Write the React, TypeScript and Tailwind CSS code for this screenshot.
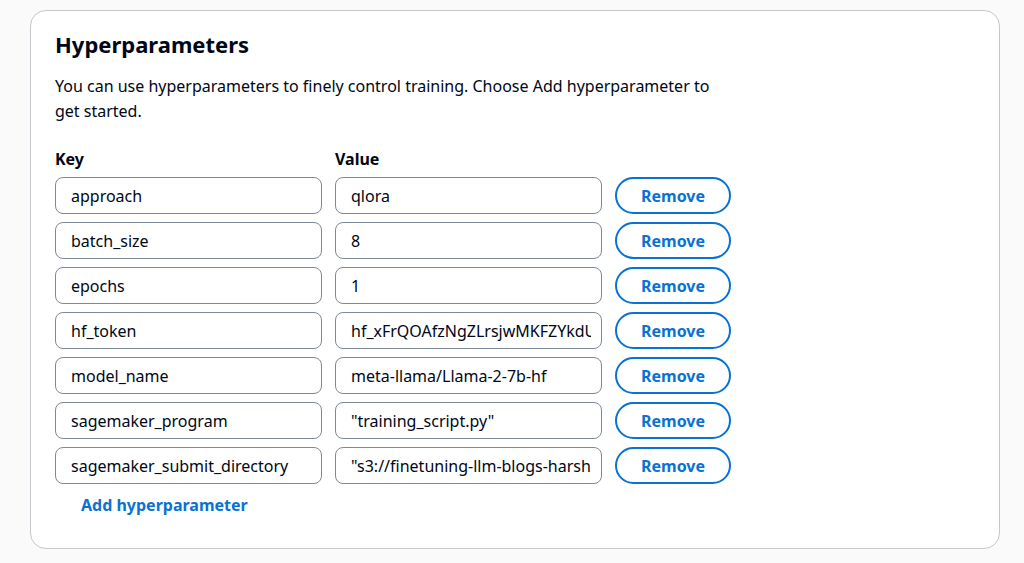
import React from 'react';

type Param = { key: string; value: string };

const params: Param[] = [
  { key: 'approach', value: 'qlora' },
  { key: 'batch_size', value: '8' },
  { key: 'epochs', value: '1' },
  { key: 'hf_token', value: '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' },
  { key: 'model_name', value: 'meta-llama/Llama-2-7b-hf' },
  { key: 'sagemaker_program', value: '"training_script.py"' },
  { key: 'sagemaker_submit_directory', value: '"s3://finetuning-llm-blogs-harsh/source/sourcedir.tar.gz"' },
];

const inputCls =
  'w-[267px] h-[37px] rounded-[8px] border border-[#7d8998] bg-white pl-[15px] pr-[10px] text-[16px] text-[#000716] outline-none';

export default function App() {
  return (
    <div className="min-h-[563px] w-[1024px] bg-[#fafafa] pt-[10px] pl-[30px] font-['Noto_Sans','Open_Sans',sans-serif] text-[#000716]">
      <div className="w-[970px] h-[539px] rounded-[16px] border border-[#c6c6cd] bg-white pl-[24px] pt-[19px]">
        <h2 className="text-[22px] leading-[28px] font-bold">Hyperparameters</h2>
        <p className="mt-[16px] max-w-[672px] text-[16px] leading-[25px]">
          You can use hyperparameters to finely control training. Choose Add hyperparameter to get started.
        </p>

        <div className="mt-[23px] flex text-[16px] font-bold leading-[24px]">
          <span className="w-[280px]">Key</span>
          <span>Value</span>
        </div>

        <div className="mt-[6px] flex flex-col gap-[8px]">
          {params.map(p => (
            <div key={p.key} className="flex items-center">
              <input readOnly value={p.key} className={inputCls} />
              <input readOnly value={p.value} className={`${inputCls} ml-[13px]`} />
              <button className="ml-[13px] w-[116px] h-[37px] rounded-full border-2 border-[#0972d3] text-[#0972d3] text-[16px] font-bold">
                Remove
              </button>
            </div>
          ))}
        </div>

        <button className="mt-[9px] ml-[26px] text-[16px] font-bold leading-[24px] text-[#0972d3]">
          Add hyperparameter
        </button>
      </div>
    </div>
  );
}
